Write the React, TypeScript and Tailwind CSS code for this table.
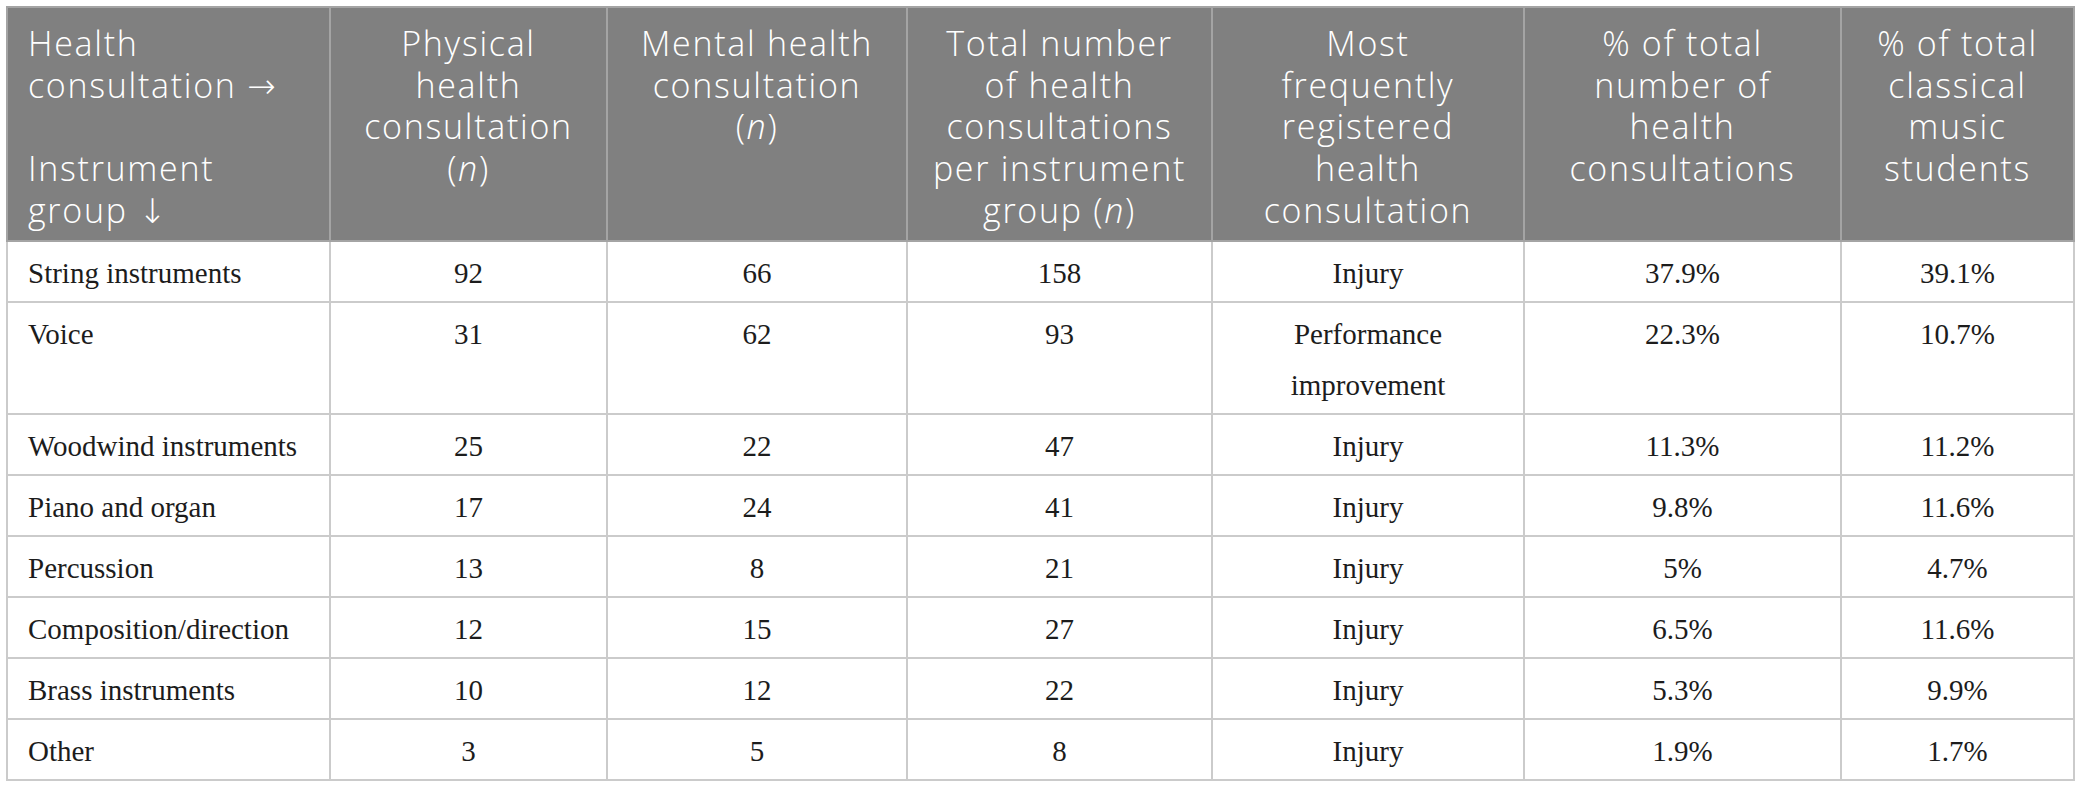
import React from "react";

type Row = {
  group: string;
  physical: string;
  mental: string;
  total: string;
  common: string[];
  pctConsult: string;
  pctStudents: string;
};

const rows: Row[] = [
  { group: "String instruments",   physical: "92", mental: "66", total: "158", common: ["Injury"], pctConsult: "37.9%", pctStudents: "39.1%" },
  { group: "Voice",                physical: "31", mental: "62", total: "93",  common: ["Performance", "improvement"], pctConsult: "22.3%", pctStudents: "10.7%" },
  { group: "Woodwind instruments", physical: "25", mental: "22", total: "47",  common: ["Injury"], pctConsult: "11.3%", pctStudents: "11.2%" },
  { group: "Piano and organ",      physical: "17", mental: "24", total: "41",  common: ["Injury"], pctConsult: "9.8%",  pctStudents: "11.6%" },
  { group: "Percussion",           physical: "13", mental: "8",  total: "21",  common: ["Injury"], pctConsult: "5%",    pctStudents: "4.7%" },
  { group: "Composition/direction", physical: "12", mental: "15", total: "27", common: ["Injury"], pctConsult: "6.5%",  pctStudents: "11.6%" },
  { group: "Brass instruments",    physical: "10", mental: "12", total: "22",  common: ["Injury"], pctConsult: "5.3%",  pctStudents: "9.9%" },
  { group: "Other",                physical: "3",  mental: "5",  total: "8",   common: ["Injury"], pctConsult: "1.9%",  pctStudents: "1.7%" },
];

const N = () => <i>n</i>;

// arrows in the header are drawn wider than Open Sans has them
const Arrow = ({ ch }: { ch: string }) => (
  <span className="font-['DejaVu_Sans',sans-serif] font-light tracking-normal leading-[0px]">{ch}</span>
);

function Th({ children, left }: { children: React.ReactNode; left?: boolean }) {
  return (
    <th
      className={`align-top border-2 border-[#a4a4a4] pt-[15px] pb-[8px] ${left ? "text-left pl-[20px] pr-2" : "text-center px-2"} font-light`}
    >
      {children}
    </th>
  );
}

function Td({ children, left }: { children: React.ReactNode; left?: boolean }) {
  return (
    <td className={`align-top border-2 border-[#cbcbcb] pt-[6px] pb-[2px] ${left ? "text-left pl-[20px] pr-2" : "text-center px-2"}`}>
      {children}
    </td>
  );
}

export default function App() {
  return (
    <div className="min-h-screen bg-white pt-[6px] pl-[6px]">
      <table className="table-fixed border-collapse w-[2067px] border-2 border-[#cbcbcb]">
        <colgroup>
          <col className="w-[323px]" />
          <col className="w-[277px]" />
          <col className="w-[300px]" />
          <col className="w-[305px]" />
          <col className="w-[312px]" />
          <col className="w-[317px]" />
          <col className="w-[233px]" />
        </colgroup>
        <thead>
          <tr className="bg-[#808080] text-white text-[34px] leading-[41.7px] tracking-[0.05em] font-['Open_Sans',sans-serif]">
            <Th left>
              Health
              <br />
              consultation <Arrow ch="→" />
              <br />
              <br />
              Instrument
              <br />
              group <Arrow ch="↓" />
            </Th>
            <Th>
              Physical
              <br />
              health
              <br />
              consultation
              <br />
              (<N />)
            </Th>
            <Th>
              Mental health
              <br />
              consultation
              <br />
              (<N />)
            </Th>
            <Th>
              Total number
              <br />
              of health
              <br />
              consultations
              <br />
              per instrument
              <br />
              group (<N />)
            </Th>
            <Th>
              Most
              <br />
              frequently
              <br />
              registered
              <br />
              health
              <br />
              consultation
            </Th>
            <Th>
              % of total
              <br />
              number of
              <br />
              health
              <br />
              consultations
            </Th>
            <Th>
              % of total
              <br />
              classical
              <br />
              music
              <br />
              students
            </Th>
          </tr>
        </thead>
        <tbody className="text-[#1c1c1c] text-[29px] leading-[51px] font-['Liberation_Serif',serif]">
          {rows.map((r) => (
            <tr key={r.group}>
              <Td left>{r.group}</Td>
              <Td>{r.physical}</Td>
              <Td>{r.mental}</Td>
              <Td>{r.total}</Td>
              <Td>
                {r.common.map((line, i) => (
                  <React.Fragment key={line}>
                    {i > 0 && <br />}
                    {line}
                  </React.Fragment>
                ))}
              </Td>
              <Td>{r.pctConsult}</Td>
              <Td>{r.pctStudents}</Td>
            </tr>
          ))}
        </tbody>
      </table>
    </div>
  );
}
